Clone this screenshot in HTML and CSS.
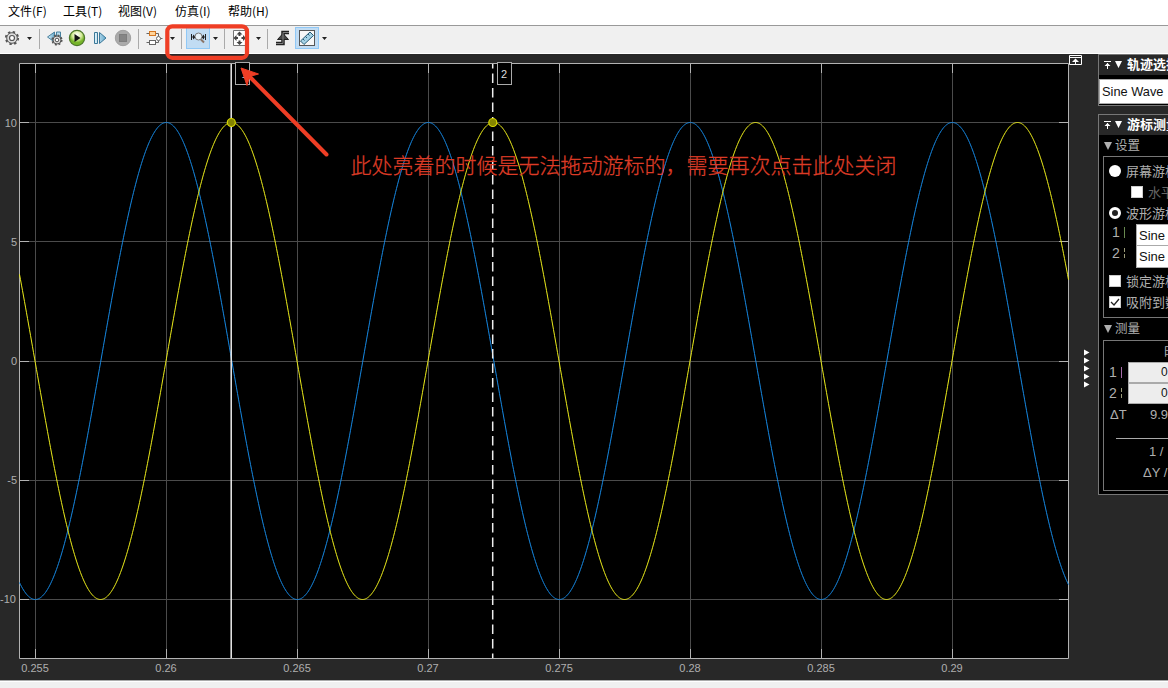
FILE: index.html
```html
<!DOCTYPE html>
<html lang="zh-CN">
<head>
<meta charset="utf-8">
<title>Scope</title>
<link rel="stylesheet" href="styles.css">
</head>
<body>
<div class="window">
  <nav class="menubar">
    <span class="menu m-file">文件(F)</span><span class="menu m-tools">工具(T)</span><span class="menu m-view">视图(V)</span><span class="menu m-sim">仿真(I)</span><span class="menu m-help">帮助(H)</span>
  </nav>
  <div class="toolbar">
    <svg width="340" height="27" viewBox="0 26 340 27">
      <defs><radialGradient id="play" cy=".3"><stop offset="0" stop-color="#fff"/><stop offset=".6" stop-color="#d5eb9b"/><stop offset="1" stop-color="#77b52a"/></radialGradient>
      <linearGradient id="blue"><stop offset="0" stop-color="#e4f5fc"/><stop offset="1" stop-color="#62a8cc"/></linearGradient></defs>
      <g class="seps"><path d="M39.500 29v20M138.500 29v20M181.500 29v20M224.500 29v20M267.500 29v20"/></g>
      <g class="carets"><path d="M27 37h5l-2.500 3zM170 37h5l-2.500 3zM213 37h5l-2.500 3zM256 37h5l-2.500 3zM322 37h5l-2.500 3z"/></g>
      <g fill="none" stroke="#555"><circle cx="12" cy="38" r="6.200" stroke-width="1.800" stroke-dasharray="2.400 2.470"/><circle cx="12" cy="38" r="5.300" fill="#ddd"/><circle cx="12" cy="38" r="2.500" fill="#fff" stroke-width="1.200"/></g>
      <path d="M54.500 32v10l-7-5z" fill="url(#blue)" stroke="#48809e"/><path d="M56.500 32h4v9h-4z" fill="#b4dcee" stroke="#48809e"/>
      <g fill="none" stroke="#555"><circle cx="57" cy="40" r="4.800" stroke-width="1.500" stroke-dasharray="2 1.770"/><circle cx="57" cy="40" r="4" fill="#ddd"/><circle cx="57" cy="40" r="1.800" fill="#fff"/></g>
      <circle cx="77" cy="38" r="7.600" fill="url(#play)" stroke="#4d772a" stroke-width="1.200"/><path d="M74.500 34v8l6-4z" fill="#111"/>
      <path d="M94.500 32.500h3v11h-3zM99.500 32.500v11l6.500-5.500z" fill="url(#blue)" stroke="#3b7898"/>
      <circle cx="123" cy="38" r="7.700" fill="#aaa" stroke="#a0a0a0"/><rect x="119.500" y="34.500" width="7" height="7" fill="#858585" stroke="#7d7d7d"/>
      <path d="M146.500 33.500h3M156 33.500h2.500v3M146.500 42.500h3M156 42.500h2.500v-2M160 38.500h2.500" stroke="#666" fill="none"/>
      <rect x="149.500" y="31.500" width="6" height="4" fill="#ffd49b" stroke="#d47723"/><rect x="149.500" y="40.500" width="6" height="4" fill="#fff" stroke="#666"/><circle cx="158.500" cy="38.500" r="2" fill="#fff" stroke="#666"/>
      <rect x="186.500" y="27.500" width="23" height="21" fill="#c1dcf3" stroke="#90c8f6"/>
      <path d="M191.500 34v6M205.500 34v6M192 37h3M202 37h3" stroke="#222"/><path d="m193 34.500 3 2.500-3 2.500zm11 0-3 2.500 3 2.500z" fill="#222"/><circle cx="198.500" cy="36.500" r="3.500" fill="#e8f3fa" stroke="#777"/><path d="m201 39.500 3 3" stroke="#8b7568" stroke-width="2"/>
      <path d="M233.500 30.500h12v15h-12z" fill="#fff" stroke="#777"/><path d="m239.500 31.500 3 3h-2v1.500h-2v-1.500h-2zM239.500 45l3-3h-2v-1.500h-2v1.500h-2zM233.500 38l3-3v2h1.500v2h-1.500v2zM246 38l-3-3v2h-1.500v2h1.500v2z" fill="#444"/>
      <path d="M276 43.500h7v-11h6" fill="none" stroke="#222" stroke-width="3.500"/><path d="m283 33.500 5.500 6h-11z" fill="#444" stroke="#222"/><path d="M276 43.500h7v-11h6" fill="none" stroke="#808080"/>
      <rect x="295.500" y="27.500" width="23" height="21" fill="#c1dcf3" stroke="#90c8f6"/><rect x="299.500" y="30.500" width="15" height="15" fill="#f7f7f7" stroke="#555"/><path d="m300.500 41 9.500-9 3.500 3.500-9.500 9z" fill="#a5d3e7" stroke="#295b75"/><path d="m303 39 1.500 1.500m1-4 1.500 1.500m1-4 1.500 1.500" stroke="#295b75"/>
    </svg>
  </div>
  <main class="workspace">
    <svg class="chart" width="1098" height="626" viewBox="0 54 1098 626">
      <rect x="19.500" y="63.500" width="1049" height="595" fill="#000"/>
      <path class="grid" d="M35.500 64v594M166.500 64v594M297.500 64v594M428.500 64v594M559.500 64v594M690.500 64v594M821.500 64v594M952.500 64v594M20 122.500h1048M20 241.500h1048M20 361.500h1048M20 480.500h1048M20 599.500h1048"/>
      <path class="frame" d="M19.500 63.500h1049v595H19.500zM35.500 64v9M166.500 64v9M297.500 64v9M428.500 64v9M559.500 64v9M690.500 64v9M821.500 64v9M952.500 64v9M35.500 649v9M166.500 649v9M297.500 649v9M428.500 649v9M559.500 649v9M690.500 649v9M821.500 649v9M952.500 649v9M20 122.500h9M20 241.500h9M20 361.500h9M20 480.500h9M20 599.500h9M1059 122.500h9M1059 241.500h9M1059 361.500h9M1059 480.500h9M1059 599.500h9"/>
      <polyline class="wave blue" id="wave1"/><polyline class="wave yellow" id="wave2"/>
      <path class="cursor" d="M231.200 64v594"/><path class="cursor dashed" d="M492.700 64v594"/>
      <circle class="mark" cx="231.300" cy="122.500" r="4"/><circle class="mark" cx="492.800" cy="122.500" r="4"/>
      <g class="tag"><rect x="235.500" y="62.500" width="14" height="22"/><text x="244.500" y="78">1</text><rect x="497.500" y="62.500" width="14" height="22"/><text x="504" y="78">2</text></g>
      <g class="ylabels"><text x="17" y="127">10</text><text x="17" y="246">5</text><text x="17" y="365">0</text><text x="17" y="484">-5</text><text x="16" y="603">-10</text></g>
      <g class="xlabels"><text x="35" y="672">0.255</text><text x="166" y="672">0.26</text><text x="297" y="672">0.265</text><text x="428" y="672">0.27</text><text x="559" y="672">0.275</text><text x="690" y="672">0.28</text><text x="821" y="672">0.285</text><text x="952" y="672">0.29</text></g>
      <path d="M1069.500 55.500h12v9h-12zM1070 57.500h11M1075.500 64v-4" fill="none" stroke="#fff"/><path d="m1075.500 58.500 3.500 3.500h-7z" fill="#fff"/>
      <path d="M1084 349.500l5.500 3-5.500 3zm0 8 5.500 3-5.500 3zm0 8 5.500 3-5.500 3zm0 8 5.500 3-5.500 3zm0 8 5.500 3-5.500 3z" fill="#fff"/>
    </svg>
    <aside class="sidebar">
      <section class="panel trace">
        <h2 class="head"><svg width="22" height="12"><path d="M0 2.500h7M3.500 4v6" stroke="#fff"/><path d="m3.500 4 3 3h-6zM11 2h7l-3.500 7z" fill="#fff"/></svg>轨迹选择</h2>
        <div class="select">Sine Wave</div>
      </section>
      <section class="panel cursors">
        <h2 class="head"><svg width="22" height="12"><path d="M0 2.500h7M3.500 4v6" stroke="#fff"/><path d="m3.500 4 3 3h-6zM11 2h7l-3.500 7z" fill="#fff"/></svg>游标测量</h2>
        <h3 class="sub"><i class="tri"></i>设置</h3>
        <div class="box settings">
          <div class="option"><i class="radio"></i>屏幕游标</div>
          <div class="option indented dim"><i class="check"></i>水平</div>
          <div class="option"><i class="radio on"></i>波形游标</div>
          <div class="sources"><div class="source"><span class="id">1 <b class="solid"></b></span><span class="field">Sine</span></div><div class="source"><span class="id">2 <b class="broken"></b></span><span class="field">Sine</span></div></div>
          <div class="option"><i class="check"></i>锁定游标</div>
          <div class="option"><i class="check"><svg width="10" height="10"><path d="m1 5 3 3 5-6" fill="none" stroke="#222" stroke-width="1.300"/></svg></i>吸附到数据</div>
        </div>
        <h3 class="sub measure"><i class="tri"></i>测量</h3>
        <div class="box results">
          <div class="time">时间</div>
          <div class="value"><span>1 <b class="solid"></b></span><span class="num">0.263</span></div>
          <div class="value"><span>2 <b class="broken"></b></span><span class="num">0.273</span></div>
          <div class="delta"><span>ΔT</span><span>9.9</span></div>
          <div class="rule"></div>
          <div class="ratio">1 /</div><div class="ratio slope">ΔY /</div>
        </div>
      </section>
    </aside>
  </main>
  <footer class="status"></footer>
  <svg class="annotation" width="1168" height="688">
    <rect x="167.300" y="26.300" width="79.700" height="31.500" rx="5"/>
    <path class="shaft" d="M326.500 154.500 250 77"/><path class="tip" d="m241 68 17.500 6-9 2.500-2.500 9z"/>
    <text x="350.500" y="173" textLength="546">此处亮着的时候是无法拖动游标的，需要再次点击此处关闭</text>
  </svg>
</div>
<script src="chart.js"></script>
</body>
</html>
```
FILE: styles.css
```css
* { box-sizing: border-box; }
body { margin: 0; overflow: hidden; font: 12px "Liberation Sans", "Noto Sans CJK SC", sans-serif; }
.window { position: relative; display: flex; flex-direction: column; width: 1168px; height: 688px; overflow: hidden; background: #282828; }
.menubar { display: flex; height: 25px; padding-left: 8px; background: #fff; color: #000; line-height: 22px; font-family: "Noto Sans CJK SC", sans-serif; font-size: 12px; }
.menu { white-space: nowrap; }
.m-file, .m-tools { width: 55px; }
.m-view { width: 57px; }
.m-sim { width: 53px; }
.toolbar { height: 29px; border-top: 1px solid #999; border-bottom: 1px solid #fff; background: #f0f0f0; }
.toolbar svg { display: block; }
.seps { stroke: #aaa; }
.carets { fill: #222; }
.workspace { display: flex; height: 626px; overflow: hidden; }
.chart { flex: none; display: block; }
.grid { stroke: #4b4b4b; fill: none; }
.frame { stroke: #b2b2b2; fill: none; }
.wave { fill: none; stroke-width: 1; }
.blue { stroke: #1689e4; }
.yellow { stroke: #eded1b; }
.cursor { stroke: #ededed; stroke-width: 1.500px; }
.dashed { stroke-dasharray: 9.500px 5px; stroke-dashoffset: 5px; }
.mark { fill: #858500; stroke: #d6d600; stroke-width: 1.200px; }
.tag rect { fill: #000; stroke: #aaa; }
.tag text { fill: #ddd; font-size: 11px; text-anchor: middle; }
.ylabels, .xlabels { fill: #afafaf; font-size: 11px; }
.ylabels { text-anchor: end; }
.xlabels { text-anchor: middle; }
.sidebar { flex: none; width: 130px; color: #afafaf; white-space: nowrap; }
.panel { border: 1px solid #777; background: #000; }
.trace { height: 52px; }
.cursors { height: 381px; margin-top: 8px; }
.head { display: flex; align-items: center; height: 20px; margin: 0; padding-left: 5px; background: #282828; color: #fff; font-size: 13px; line-height: 18px; }
.head svg { flex: none; margin-right: 1px; }
.select { height: 25px; margin-top: 4px; padding-left: 2px; border: 1px solid #aaa; background: #fff; color: #111; line-height: 23px; font-size: 12.800px; }
.sub { display: flex; align-items: center; height: 21px; margin: 0 0 0 5px; font-size: 12.500px; line-height: 18px; font-weight: normal; }
.tri { width: 0; height: 0; margin-right: 3px; border: 4px solid transparent; border-top: 8px solid #afafaf; border-bottom: 0; }
.box { width: 140px; margin-left: 4px; border: 1px solid #777; }
.settings { height: 162px; padding-top: 3px; }
.option { display: flex; align-items: center; gap: 5px; height: 21px; padding-left: 5px; font-size: 13px; }
.indented { padding-left: 27px; }
.dim { color: #666; }
.radio { width: 12px; height: 12px; border-radius: 50%; background: #fff; }
.radio.on { border: 3px solid #fff; background: #222; }
.check { width: 12px; height: 12px; border: 1px solid #ccc; background: #fff; }
.check svg { display: block; }
.sources { height: 47px; padding: 1px 0 0 8px; font-size: 14px; }
.source { display: flex; height: 21px; }
.id { width: 24px; line-height: 16px; }
.solid, .broken { display: inline-block; width: 1px; height: 11px; margin-left: 0; background: #68894f; vertical-align: -1px; }
.broken { background: repeating-linear-gradient(#9b9b79 0 4px, #000 4px 6px); }
.field { width: 100px; height: 23px; padding-left: 2px; border: 1px solid #aaa; background: #fff; color: #111; font-size: 13px; line-height: 22px; }
.measure { height: 22px; }
.results { height: 151px; font-size: 13px; }
.time { height: 21px; padding-left: 60px; line-height: 22px; }
.value { display: flex; height: 21px; padding-left: 5px; line-height: 21px; font-size: 14px; }
.value > span:first-child { width: 19px; }
.num { width: 108px; padding-left: 32px; border: 1px solid #aaa; background: #ededed; color: #111; font-size: 12px; line-height: 18px; }
.value .solid { background: #a66ca9; }
.delta { display: flex; height: 34px; padding: 3px 0 0 6px; font-size: 13px; }
.delta span:first-child { width: 40px; }
.rule { height: 1px; margin-left: 12px; background: #aaa; }
.ratio { height: 21px; padding: 5px 0 0 45px; }
.slope { padding-left: 39px; }
.status { height: 8px; border-top: 1px solid #aaa; background: linear-gradient(#fff 1px, #f0f0f0 1px); }
.annotation { position: absolute; inset: 0; pointer-events: none; }
.annotation rect { fill: none; stroke: #ef3e25; stroke-width: 4.200px; }
.shaft { stroke: #ef3e25; stroke-width: 4px; stroke-linecap: round; }
.tip { fill: #ef3e25; stroke: #ef3e25; }
.annotation text { fill: #dc3b26; stroke: #dc3b26; stroke-width: .3px; font: 300 21px "Noto Sans CJK SC", sans-serif; }
```
FILE: chart.js
```js
function drawWave(id, peak) {
  const points = [];
  for (let x = 19.5; x <= 1068.5; x += 1) {
    const y = 361 - 238.5 * Math.cos((x - peak) * 2 * Math.PI / 262);
    points.push(x + "," + y.toFixed(2));
  }
  document.getElementById(id).setAttribute("points", points.join(" "));
}
drawWave("wave1", 166.3);
drawWave("wave2", 231.5);
```
